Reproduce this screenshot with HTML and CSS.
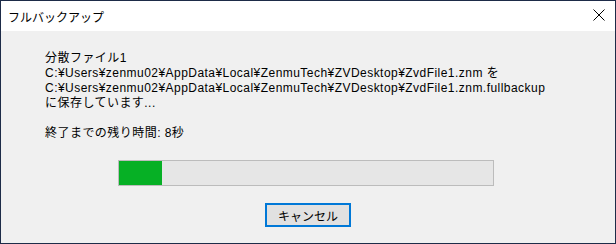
FILE: index.html
```html
<!DOCTYPE html>
<html lang="ja">
<head>
<meta charset="utf-8">
<link rel="stylesheet" href="styles.css">
</head>
<body>
<div class="window">
  <div class="titlebar">
    <span class="title">フルバックアップ</span>
    <svg class="close" width="12" height="12" viewBox="0 0 12 12"><path d="M0.5 0.5L11.5 11.5M11.5 0.5L0.5 11.5" stroke="#000" stroke-width="1" fill="none"/></svg>
  </div>
  <div class="content">
    <div class="msg">
      <div class="line">分散ファイル1</div>
      <div class="line">C:¥Users¥zenmu02¥AppData¥Local¥ZenmuTech¥ZVDesktop¥ZvdFile1.znm を</div>
      <div class="line">C:¥Users¥zenmu02¥AppData¥Local¥ZenmuTech¥ZVDesktop¥ZvdFile1.znm.fullbackup</div>
      <div class="line">に保存しています...</div>
      <div class="line blank"></div>
      <div class="line">終了までの残り時間: 8秒</div>
    </div>
    <div class="progress"><div class="fill" style="width:43px"></div></div>
    <div class="actions"><button class="btn">キャンセル</button></div>
  </div>
</div>
</body>
</html>
```
FILE: styles.css
```css
html, body { margin: 0; padding: 0; }
body {
  width: 616px; height: 244px; overflow: hidden;
  font-family: "Liberation Sans", "Noto Sans CJK JP", sans-serif;
  font-size: 12px; color: #000;
}
.window {
  box-sizing: border-box;
  width: 616px; height: 244px;
  border: 1px solid #1d2b48;
  background: #f0f0f0;
  display: flex; flex-direction: column;
}
.titlebar {
  height: 30px; background: #fff;
  display: flex; align-items: center; justify-content: space-between;
  padding: 0 8px 0 7px;
}
.title { font-family: "Noto Sans CJK JP", sans-serif; font-size: 12px; }
.close { margin-right: 2px; margin-top: -2px; }
.content {
  flex: 1;
  display: flex; flex-direction: column;
  padding: 20px 0 0 44px;
}
.msg .line { height: 15px; line-height: 15px; white-space: nowrap; letter-spacing: 0.46px; }
.msg .line.blank { height: 15px; }
.progress {
  margin: 19px 0 0 73px;
  box-sizing: border-box;
  width: 376px; height: 26px;
  border: 1px solid #bcbcbc;
  background: #e6e6e6;
}
.fill { height: 100%; background: #06b025; }
.actions { margin-top: 17px; padding-left: 220px; }
.btn {
  box-sizing: border-box;
  width: 86px; height: 24px;
  border: 2px solid #0078d7;
  background: #e1e1e1;
  font-family: "Noto Sans CJK JP", sans-serif;
  font-size: 12px; color: #000;
  padding: 0; margin: 0;
}
```
